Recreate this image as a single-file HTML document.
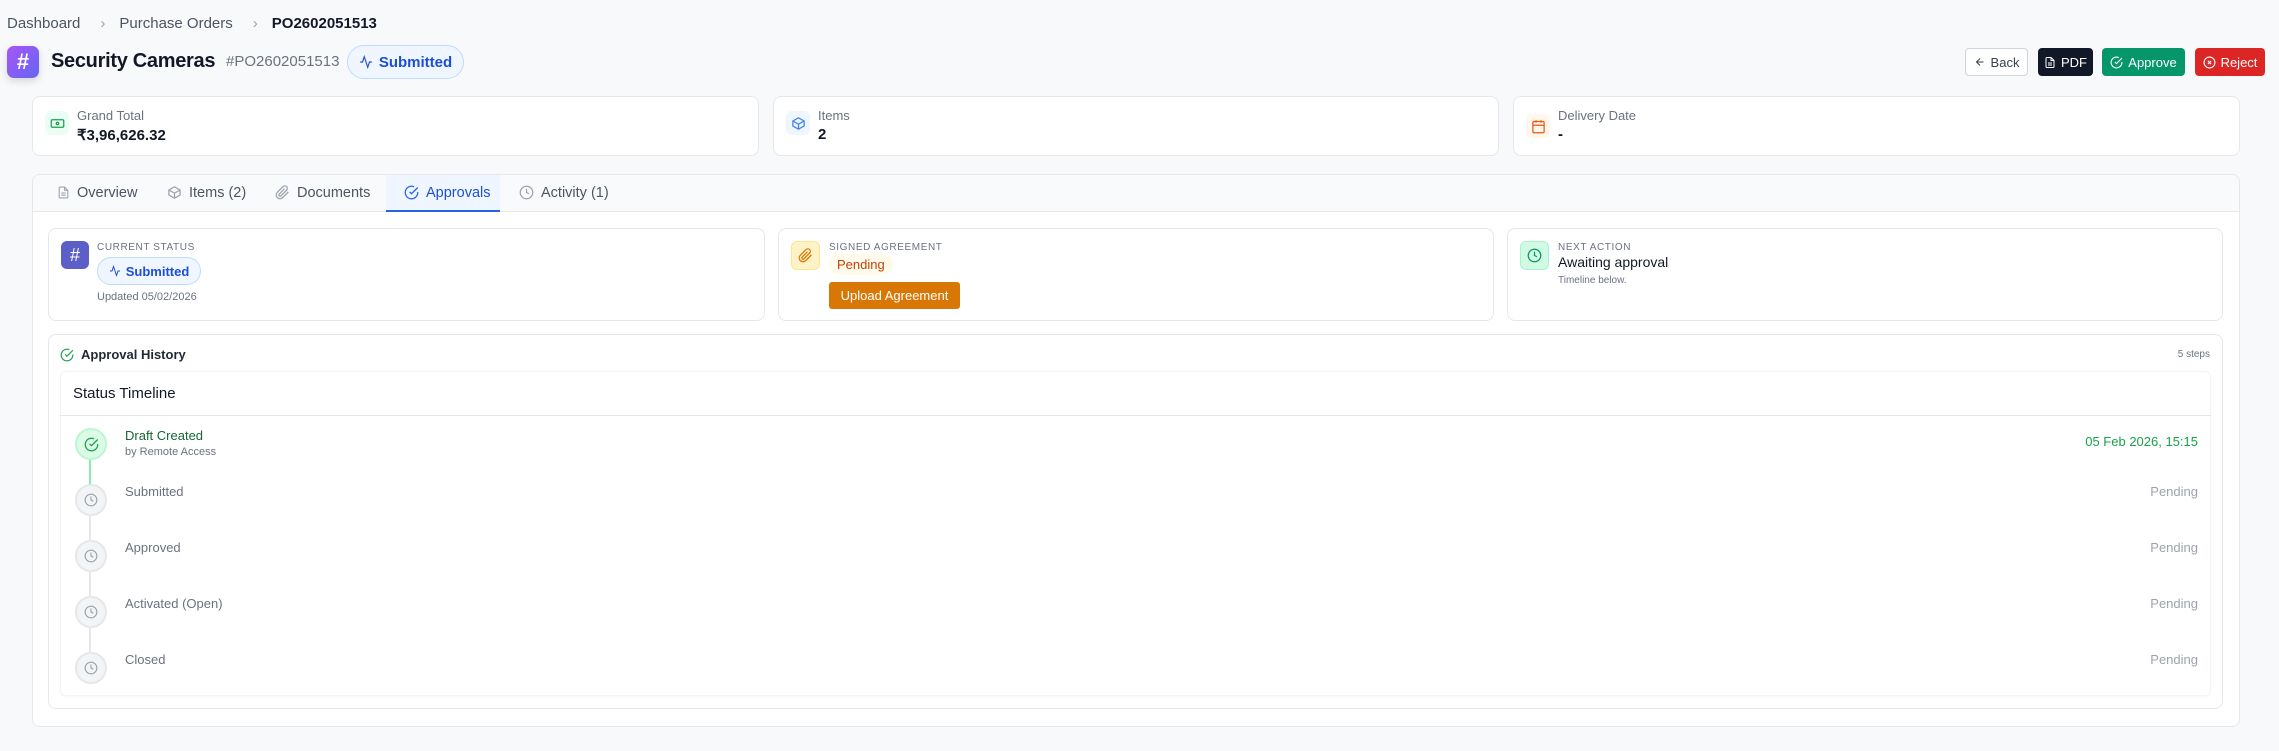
<!DOCTYPE html>
<html><head><meta charset="utf-8"><style>
*{box-sizing:border-box;margin:0;padding:0}
body{width:2279px;height:751px;background:#f8f9fb;font-family:"Liberation Sans",Arial,sans-serif;color:#111827;position:relative;overflow:hidden}
.a{position:absolute}
.card{position:absolute;background:#fff;border:1px solid #e5e7eb;border-radius:8px}
svg{display:block}
.ic{position:absolute;display:flex;align-items:center;justify-content:center;border-radius:6px}
.btn{position:absolute;top:48px;height:28px;border-radius:4px;display:flex;align-items:center;justify-content:center;gap:5px;font-size:13px;color:#fff}
.lab{font-size:10px;letter-spacing:.6px;color:#6b7280;text-transform:uppercase}
.tab{position:absolute;top:174px;height:37px;display:flex;align-items:center;gap:7px;font-size:14.5px;color:#4b5563}
.circ{position:absolute;left:75px;width:32px;height:32px;border-radius:50%;background:#f3f4f6;border:2px solid #e5e7eb;display:flex;align-items:center;justify-content:center}
.tl{position:absolute;left:125px;font-size:13px;color:#6b7280}
.pd{position:absolute;right:81px;font-size:13px;color:#9ca3af}
</style></head><body>
<div class="a" style="left:7px;top:14px;font-size:15px;color:#4b5563;display:flex;align-items:center;height:18px">
<span>Dashboard</span><span style="margin:0 14px 0 20px;color:#9ca3af">›</span><span>Purchase Orders</span><span style="margin:0 14px 0 20px;color:#9ca3af">›</span><span style="color:#111827;font-weight:bold">PO2602051513</span></div>

<div class="ic" style="left:7px;top:46px;width:32px;height:32px;border-radius:7px;background:linear-gradient(135deg,#a855f7,#6366f1);box-shadow:0 3px 8px rgba(0,0,0,.15);color:#fff;font-size:22px;font-weight:bold">#</div>
<div class="a" style="left:51px;top:50px;font-size:20px;font-weight:bold;color:#111827;letter-spacing:-0.3px">Security Cameras</div>
<div class="a" style="left:226px;top:53px;font-size:15px;color:#6b7280">#PO2602051513</div>
<div class="a" style="left:347px;top:45px;width:117px;height:34px;border-radius:17px;background:#eff6ff;border:1px solid #bfdbfe;display:flex;align-items:center;justify-content:center;gap:6px;color:#1d4ed8;font-size:15px;font-weight:bold">
<svg width="14" height="14" viewBox="0 0 24 24" fill="none" stroke="#1d4ed8" stroke-width="2"><path d="M22 12h-4l-3 9L9 3l-3 9H2"/></svg>Submitted</div>

<div class="btn" style="left:1965px;width:63px;background:#fff;border:1px solid #d1d5db;color:#374151">
<svg width="12" height="12" viewBox="0 0 24 24" fill="none" stroke="#374151" stroke-width="2"><path d="M19 12H5M12 19l-7-7 7-7"/></svg>Back</div>
<div class="btn" style="left:2038px;width:55px;background:#111827">
<svg width="12" height="13" viewBox="0 0 24 24" fill="none" stroke="#fff" stroke-width="2"><path d="M14 2H6a2 2 0 0 0-2 2v16a2 2 0 0 0 2 2h12a2 2 0 0 0 2-2V8z M14 2v6h6M8 13h8M8 17h8"/></svg>PDF</div>
<div class="btn" style="left:2102px;width:83px;background:#059669">
<svg width="13" height="13" viewBox="0 0 24 24" fill="none" stroke="#fff" stroke-width="2"><path d="M22 11.1V12a10 10 0 1 1-5.9-9.1M22 4 12 14l-3-3"/></svg>Approve</div>
<div class="btn" style="left:2195px;width:70px;background:#dc2626">
<svg width="13" height="13" viewBox="0 0 24 24" fill="none" stroke="#fff" stroke-width="2"><circle cx="12" cy="12" r="10"/><path d="m15 9-6 6M9 9l6 6"/></svg>Reject</div>

<!-- stat cards -->
<div class="card" style="left:32px;top:96px;width:727px;height:60px">
<div class="ic" style="left:12px;top:14px;width:24px;height:24px;background:#ecfdf5"><svg width="15" height="15" viewBox="0 0 24 24" fill="none" stroke="#16a34a" stroke-width="2"><rect x="2" y="6" width="20" height="12" rx="2"/><circle cx="12" cy="12" r="2"/></svg></div>
<div class="a" style="left:44px;top:11px;font-size:13px;color:#6b7280">Grand Total</div>
<div class="a" style="left:44px;top:29px;font-size:15px;font-weight:bold">₹3,96,626.32</div></div>
<div class="card" style="left:773px;top:96px;width:726px;height:60px">
<div class="ic" style="left:12px;top:14px;width:24px;height:24px;background:#eff6ff"><svg width="15" height="15" viewBox="0 0 24 24" fill="none" stroke="#3b82f6" stroke-width="2"><path d="M21 8 12 3 3 8v8l9 5 9-5z M3 8l9 5 9-5M12 13v8"/></svg></div>
<div class="a" style="left:44px;top:11px;font-size:13px;color:#6b7280">Items</div>
<div class="a" style="left:44px;top:29px;font-size:15px;font-weight:bold">2</div></div>
<div class="card" style="left:1513px;top:96px;width:727px;height:60px">
<div class="ic" style="left:12px;top:17px;width:24px;height:24px;background:#fff7ed"><svg width="15" height="15" viewBox="0 0 24 24" fill="none" stroke="#ea580c" stroke-width="2"><rect x="3" y="4" width="18" height="18" rx="2"/><path d="M16 2v4M8 2v4M3 10h18"/></svg></div>
<div class="a" style="left:44px;top:11px;font-size:13px;color:#6b7280">Delivery Date</div>
<div class="a" style="left:44px;top:29px;font-size:15px;font-weight:bold">-</div></div>

<!-- tabs container -->
<div class="card" style="left:32px;top:174px;width:2208px;height:553px;overflow:hidden">
<div class="a" style="left:0;top:0;width:100%;height:37px;background:#f9fafb;border-bottom:1px solid #e5e7eb"></div>
<div class="a" style="left:353px;top:0;width:114px;height:37px;background:#eff6ff;border-bottom:2px solid #2563eb"></div>
</div>
<div class="tab" style="left:57px"><svg width="13" height="15" viewBox="0 0 24 24" fill="none" stroke="#9ca3af" stroke-width="2"><path d="M14 2H6a2 2 0 0 0-2 2v16a2 2 0 0 0 2 2h12a2 2 0 0 0 2-2V8z M14 2v6h6M8 13h8M8 17h8"/></svg>Overview</div>
<div class="tab" style="left:167px"><svg width="15" height="15" viewBox="0 0 24 24" fill="none" stroke="#9ca3af" stroke-width="2"><path d="M21 8 12 3 3 8v8l9 5 9-5z M3 8l9 5 9-5M12 13v8"/></svg>Items (2)</div>
<div class="tab" style="left:275px"><svg width="15" height="15" viewBox="0 0 24 24" fill="none" stroke="#9ca3af" stroke-width="2"><path d="m21.4 11-9.2 9.2a6 6 0 0 1-8.5-8.5l9.2-9.2a4 4 0 0 1 5.7 5.7l-9.2 9.2a2 2 0 0 1-2.8-2.8l8.5-8.5"/></svg>Documents</div>
<div class="tab" style="left:404px;color:#1d4ed8"><svg width="15" height="15" viewBox="0 0 24 24" fill="none" stroke="#2563eb" stroke-width="2"><path d="M22 11.1V12a10 10 0 1 1-5.9-9.1M22 4 12 14l-3-3"/></svg>Approvals</div>
<div class="tab" style="left:519px"><svg width="15" height="15" viewBox="0 0 24 24" fill="none" stroke="#9ca3af" stroke-width="2"><circle cx="12" cy="12" r="10"/><path d="M12 6v6l4 2"/></svg>Activity (1)</div>

<!-- status cards -->
<div class="card" style="left:48px;top:228px;width:717px;height:93px">
<div class="ic" style="left:12px;top:12px;width:28px;height:28px;background:#5b5fc7;color:#fff;font-size:18px">#</div>
<div class="a lab" style="left:48px;top:13px">Current Status</div>
<div class="a" style="left:48px;top:28px;width:104px;height:28px;border-radius:14px;background:#eff6ff;border:1px solid #bfdbfe;display:flex;align-items:center;justify-content:center;gap:5px;color:#1d4ed8;font-size:13px;font-weight:bold"><svg width="12" height="12" viewBox="0 0 24 24" fill="none" stroke="#1d4ed8" stroke-width="2"><path d="M22 12h-4l-3 9L9 3l-3 9H2"/></svg>Submitted</div>
<div class="a" style="left:48px;top:62px;font-size:11px;color:#6b7280">Updated 05/02/2026</div></div>
<div class="card" style="left:778px;top:228px;width:716px;height:93px">
<div class="ic" style="left:12px;top:12px;width:29px;height:29px;background:#fef3c7;border:1px solid #fde68a"><svg width="15" height="15" viewBox="0 0 24 24" fill="none" stroke="#d97706" stroke-width="2"><path d="m21.4 11-9.2 9.2a6 6 0 0 1-8.5-8.5l9.2-9.2a4 4 0 0 1 5.7 5.7l-9.2 9.2a2 2 0 0 1-2.8-2.8l8.5-8.5"/></svg></div>
<div class="a lab" style="left:50px;top:13px">Signed Agreement</div>
<div class="a" style="left:50px;top:25px;padding:3px 8px;border-radius:10px;background:#fffbeb;font-size:13px;color:#c2410c">Pending</div>
<div class="a" style="left:50px;top:53px;width:131px;height:27px;border-radius:3px;background:#d97706;color:#fff;font-size:13px;display:flex;align-items:center;justify-content:center">Upload Agreement</div></div>
<div class="card" style="left:1507px;top:228px;width:716px;height:93px">
<div class="ic" style="left:12px;top:12px;width:29px;height:29px;background:#d1fae5;border:1px solid #a7f3d0"><svg width="15" height="15" viewBox="0 0 24 24" fill="none" stroke="#059669" stroke-width="2"><circle cx="12" cy="12" r="10"/><path d="M12 6v6l4 2"/></svg></div>
<div class="a lab" style="left:50px;top:13px">Next Action</div>
<div class="a" style="left:50px;top:25px;font-size:14px;color:#111827">Awaiting approval</div>
<div class="a" style="left:50px;top:46px;font-size:10px;color:#6b7280">Timeline below.</div></div>

<!-- approval history -->
<div class="card" style="left:48px;top:334px;width:2175px;height:375px"></div>
<svg class="a" style="left:60px;top:348px" width="14" height="14" viewBox="0 0 24 24" fill="none" stroke="#16a34a" stroke-width="2"><path d="M22 11.1V12a10 10 0 1 1-5.9-9.1M22 4 12 14l-3-3"/></svg>
<div class="a" style="left:81px;top:347px;font-size:13px;font-weight:bold;color:#1f2937">Approval History</div>
<div class="a" style="right:69px;top:349px;font-size:10px;color:#6b7280">5 steps</div>
<div class="a" style="left:60px;top:371px;width:2151px;height:325px;background:#fff;border:1px solid #f3f4f6;border-radius:6px;box-shadow:0 1px 2px rgba(0,0,0,.04)"></div>
<div class="a" style="left:73px;top:385px;font-size:15px;color:#111827">Status Timeline</div>
<div class="a" style="left:60px;top:415px;width:2151px;height:1px;background:#e5e7eb"></div>

<div class="a" style="left:89px;top:459px;width:2px;height:26px;background:#86efac"></div>
<div class="a" style="left:89px;top:516px;width:2px;height:24px;background:#e5e7eb"></div>
<div class="a" style="left:89px;top:572px;width:2px;height:24px;background:#e5e7eb"></div>
<div class="a" style="left:89px;top:628px;width:2px;height:24px;background:#e5e7eb"></div>

<div class="circ" style="top:428px;background:#dcfce7;border-color:#bbf7d0"><svg width="15" height="15" viewBox="0 0 24 24" fill="none" stroke="#16a34a" stroke-width="2"><path d="M22 11.1V12a10 10 0 1 1-5.9-9.1M22 4 12 14l-3-3"/></svg></div>
<div class="circ" style="top:484px"><svg width="14" height="14" viewBox="0 0 24 24" fill="none" stroke="#9ca3af" stroke-width="2"><circle cx="12" cy="12" r="10"/><path d="M12 6v6l4 2"/></svg></div>
<div class="circ" style="top:540px"><svg width="14" height="14" viewBox="0 0 24 24" fill="none" stroke="#9ca3af" stroke-width="2"><circle cx="12" cy="12" r="10"/><path d="M12 6v6l4 2"/></svg></div>
<div class="circ" style="top:596px"><svg width="14" height="14" viewBox="0 0 24 24" fill="none" stroke="#9ca3af" stroke-width="2"><circle cx="12" cy="12" r="10"/><path d="M12 6v6l4 2"/></svg></div>
<div class="circ" style="top:652px"><svg width="14" height="14" viewBox="0 0 24 24" fill="none" stroke="#9ca3af" stroke-width="2"><circle cx="12" cy="12" r="10"/><path d="M12 6v6l4 2"/></svg></div>

<div class="tl" style="top:428px;color:#166534">Draft Created</div>
<div class="tl" style="top:446px;font-size:11px">by Remote Access</div>
<div class="pd" style="top:434px;color:#16a34a">05 Feb 2026, 15:15</div>
<div class="tl" style="top:484px">Submitted</div><div class="pd" style="top:484px">Pending</div>
<div class="tl" style="top:540px">Approved</div><div class="pd" style="top:540px">Pending</div>
<div class="tl" style="top:596px">Activated (Open)</div><div class="pd" style="top:596px">Pending</div>
<div class="tl" style="top:652px">Closed</div><div class="pd" style="top:652px">Pending</div>
</body></html>
